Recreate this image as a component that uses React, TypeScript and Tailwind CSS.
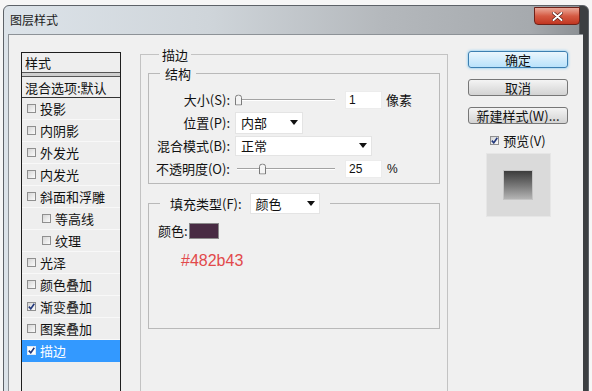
import React from 'react'

const layers = [
  { label: '投影' },
  { label: '内阴影' },
  { label: '外发光' },
  { label: '内发光' },
  { label: '斜面和浮雕' },
  { label: '等高线', sub: true },
  { label: '纹理', sub: true },
  { label: '光泽' },
  { label: '颜色叠加' },
  { label: '渐变叠加', checked: true },
  { label: '图案叠加' },
  { label: '描边', checked: true, active: true },
]

function Check({ checked, light }: { checked?: boolean; light?: boolean }) {
  return (
    <span
      className={`w-[9px] h-[9px] shrink-0 border flex items-center justify-center ${
        light ? 'border-[#dfe9f5] bg-white' : 'border-[#8f8f8f] bg-linear-to-br from-[#d6d6d6] to-[#fbfbfb]'
      }`}
    >
      {checked && (
        <svg width="7" height="7" viewBox="0 0 7 7">
          <path d="M0.8 3.6 L2.8 5.8 L6.3 0.8" stroke="#22387c" strokeWidth="1.6" fill="none" />
        </svg>
      )}
    </span>
  )
}

function Dropdown({ className, text }: { className: string; text: string }) {
  return (
    <div className={`bg-white border border-[#e4e4e4] flex items-center justify-between pl-[5px] pr-[4px] ${className}`}>
      <span>{text}</span>
      <svg width="8" height="5" viewBox="0 0 8 5">
        <path d="M0 0 H8 L4 5 Z" fill="#111" />
      </svg>
    </div>
  )
}

function Slider({ pos }: { pos: number }) {
  return (
    <div className="relative w-[100px] h-full flex items-center pl-[2px]">
      <div className="w-full h-[2px] border-t border-[#a3a3a3] border-b border-b-white" />
      <svg
        className="absolute top-1/2 -translate-y-1/2"
        style={{ left: pos }}
        width="7"
        height="11"
        viewBox="0 0 7 11"
      >
        <path d="M0.5 3 Q0.5 0.5 3.5 0.5 Q6.5 0.5 6.5 3 V10.5 H0.5 Z" fill="#f4f4f4" stroke="#7b7b7b" />
      </svg>
    </div>
  )
}

function Field({ text }: { text: string }) {
  return (
    <div className="w-[37px] h-[18px] bg-white border border-[#ececec] pl-[3px] flex items-center ml-[10px] font-['Liberation_Sans',sans-serif] text-[12px]">
      {text}
    </div>
  )
}

function Row({ label, children }: { label: string; children: React.ReactNode }) {
  return (
    <div className="h-[23px] flex items-center">
      <div className="w-[82px] text-right pr-[1px]">{label}</div>
      <div className="ml-[4px] h-full flex items-center">{children}</div>
    </div>
  )
}

function WinButton({ label, primary }: { label: string; primary?: boolean }) {
  return (
    <div
      className={`h-[17px] w-[100px] rounded-[3px] border flex items-center justify-center leading-[15px] ${
        primary
          ? 'border-[#3c7fb1] bg-linear-to-b from-[#eaf6fd] to-[#b9e2fb] shadow-[0_0_3px_#62bdf2]'
          : 'border-[#777777] bg-linear-to-b from-[#f4f4f4] to-[#d3d3d3]'
      }`}
    >
      {label}
    </div>
  )
}

export default function App() {
  return (
    <div className="w-[592px] h-[391px] overflow-hidden bg-[#f6f6f6] pt-[5px] pl-[3px] font-['Noto_Sans_CJK_SC','Liberation_Sans',sans-serif] text-[13px] text-[#111]">
      <div className="w-[586px] h-[400px] rounded-t-[6px] border border-[#5d6268] flex flex-col bg-[linear-gradient(to_right,#dce3e9_0%,#cfd5da_35%,#b4b8bc_65%,#a6aaae_90%,#8d9195_98.4%,#3c3f42_98.6%,#3c3f42_100%)]">
        {/* Title bar */}
        <div className="h-[28px] flex items-start justify-between shrink-0">
          <span className="pl-[6px] mt-[5px] text-[12px] leading-[18px] text-[#1b1b1b]">图层样式</span>
          <div className="mt-[1px] mr-[8px] w-[46px] h-[18px] rounded-b-[4px] border border-[#6e2219] bg-linear-to-b from-[#e9a899] via-[#d55a43] to-[#c13520] flex items-center justify-center">
            <svg width="11" height="9" viewBox="0 0 11 9">
              <path d="M1.5 1 L9.5 8 M9.5 1 L1.5 8" stroke="#4a0f08" strokeWidth="3.2" strokeLinecap="round" />
              <path d="M1.5 1 L9.5 8 M9.5 1 L1.5 8" stroke="#ffffff" strokeWidth="2" strokeLinecap="round" />
            </svg>
          </div>
        </div>

        {/* Client */}
        <div className="flex-1 ml-[4px] mr-[5px] border-l border-t border-[#8d9297] bg-[#f0f0f0] flex items-start pl-[12px]">
          {/* Style list */}
          <div className="mt-[17px] w-[100px] h-[360px] border border-[#1e1e1e] bg-[#eeeeee]">
            <div className="h-[19px] flex items-center pl-[3px] leading-[17px]">样式</div>
            <div className="h-[5px] border-y border-[#555555] bg-[#cfcfcf]" />
            <div className="h-[21px] flex items-center pl-[3px] border-b border-[#333333] leading-[17px]">混合选项:默认</div>
            {layers.map((l) => (
              <div
                key={l.label}
                className={`h-[22px] flex items-center gap-[4px] border-b leading-[17px] ${
                  l.sub ? 'pl-[20px]' : 'pl-[5px]'
                } ${l.active ? 'bg-[#3399ff] text-white border-[#3399ff]' : 'border-[#f8f8f8]'}`}
              >
                <Check checked={l.checked} light={l.active} />
                <span>{l.label}</span>
              </div>
            ))}
          </div>

          {/* Stroke group */}
          <fieldset className="mt-[11px] ml-[19px] w-[308px] h-[360px] border border-[#c3c3c3] px-[7px]">
            <legend className="ml-[11px] px-[3px] leading-[17px]">描边</legend>

            <fieldset className="mt-[2px] border border-[#b9b9b9] pt-[6px] pb-[3px]">
              <legend className="ml-[11px] px-[5px] leading-[17px]">结构</legend>
              <Row label="大小(S):">
                <Slider pos={0} />
                <Field text="1" />
                <span className="ml-[4px]">像素</span>
              </Row>
              <Row label="位置(P):">
                <Dropdown className="w-[68px] h-[22px]" text="内部" />
              </Row>
              <Row label="混合模式(B):">
                <Dropdown className="w-[137px] h-[20px]" text="正常" />
              </Row>
              <Row label="不透明度(O):">
                <Slider pos={24} />
                <Field text="25" />
                <span className="ml-[5px] font-['Liberation_Sans',sans-serif] text-[12px]">%</span>
              </Row>
            </fieldset>

            <fieldset className="mt-[9px] h-[136px] border border-[#b9b9b9]">
              <legend className="ml-[11px] px-[10px] flex items-center gap-[8px] leading-[17px]">
                <span>填充类型(F):</span>
                <Dropdown className="w-[70px] h-[21px]" text="颜色" />
              </legend>
              <div className="pt-[9px] pl-[9px] flex items-center gap-[1px]">
                <span className="leading-[16px]">颜色:</span>
                <div className="w-[30px] h-[16px] bg-[#482b43] border border-[#8a8a8a]" />
              </div>
              <div className="mt-[12px] pl-[32px] font-['Liberation_Sans',sans-serif] text-[16px] leading-[20px] text-[#e2494b]">
                #482b43
              </div>
            </fieldset>
          </fieldset>

          {/* Buttons */}
          <div className="mt-[16px] ml-[20px] w-[100px] flex flex-col items-center">
            <WinButton label="确定" primary />
            <div className="h-[11px]" />
            <WinButton label="取消" />
            <div className="h-[11px]" />
            <WinButton label="新建样式(W)..." />
            <div className="mt-[8px] h-[17px] flex items-center gap-[4px] leading-[17px]">
              <Check checked />
              <span>预览(V)</span>
            </div>
            <div className="mt-[4px] w-[65px] h-[64px] bg-[#dadada] border border-[#e6e6e6] flex items-center justify-center">
              <div className="w-[30px] h-[30px] bg-linear-to-b from-[#3c3c3c] to-[#b4b4b4] border border-[#c4c4c4]" />
            </div>
          </div>
        </div>
      </div>
    </div>
  )
}
